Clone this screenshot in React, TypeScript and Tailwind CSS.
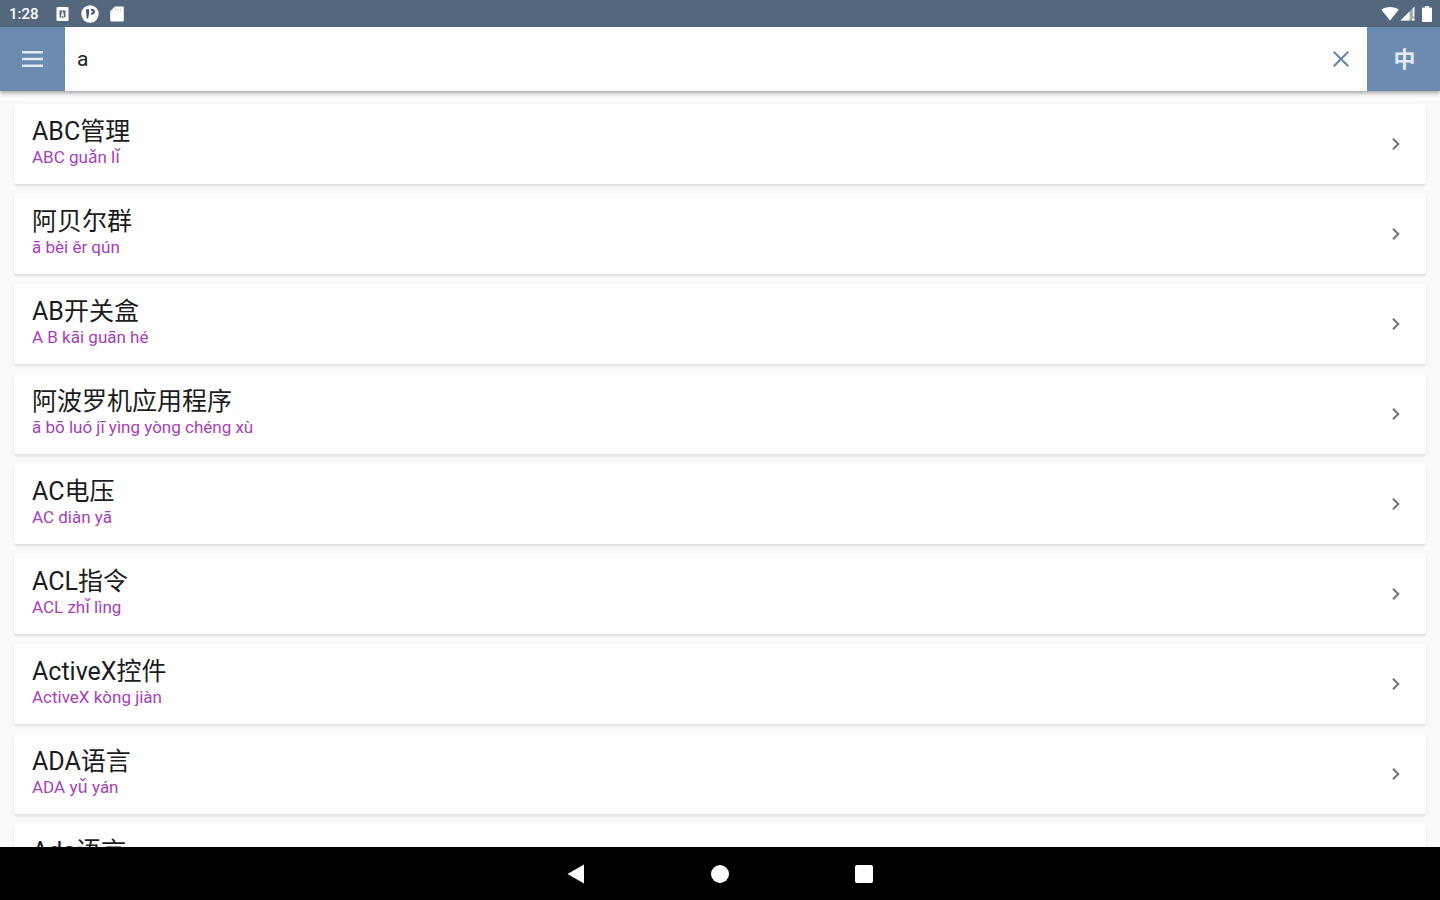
import React, { useState } from "react";

type Entry = { term: string; pinyin: string };

const entries: Entry[] = [
  { term: "ABC管理", pinyin: "ABC guǎn lǐ" },
  { term: "阿贝尔群", pinyin: "ā bèi ěr qún" },
  { term: "AB开关盒", pinyin: "A B kāi guān hé" },
  { term: "阿波罗机应用程序", pinyin: "ā bō luó jī yìng yòng chéng xù" },
  { term: "AC电压", pinyin: "AC diàn yā" },
  { term: "ACL指令", pinyin: "ACL zhǐ lìng" },
  { term: "ActiveX控件", pinyin: "ActiveX kòng jiàn" },
  { term: "ADA语言", pinyin: "ADA yǔ yán" },
  { term: "Ada语言", pinyin: "Ada yǔ yán" },
];

function StatusBar() {
  return (
    <div className="flex h-[27px] shrink-0 items-center justify-between bg-[#54687d] pr-2 pl-[9px] text-white">
      <div className="flex items-center">
        <span className="w-[47px] text-[15px] leading-5 font-medium">1:28</span>
        <svg className="mr-3 h-[14px] w-[13px]" viewBox="0 0 13 14" aria-hidden="true">
          <path
            fillRule="evenodd"
            fill="#fff"
            d="M1.5 0h10a1 1 0 0 1 1 1v12a1 1 0 0 1-1 1h-10a1 1 0 0 1-1-1V1a1 1 0 0 1 1-1zM3.5 3.5v7h6v-7z"
          />
          <path fill="#fff" d="M4.8 9.8 6 4.5h1l1.3 5.3H7.2l-.2-1H6l-.2 1z" />
        </svg>
        <svg className="mr-[11px] h-[18px] w-[18px]" viewBox="0 0 18 18" aria-hidden="true">
          <circle cx="9" cy="9" r="8.7" fill="#fff" />
          <path fill="#3f5870" d="M5 4.2h3v4L7.2 13.5H5.6z" />
          <path
            fill="#3f5870"
            d="M10 3.8c2.400 0 4 1.200 4 3S12.400 9.800 10 9.800V7.900c1.100 0 1.800-.3 1.800-1.100S11.100 5.700 10 5.700z"
          />
        </svg>
        <svg className="h-4 w-[14px]" viewBox="0 0 14 16" aria-hidden="true">
          <path
            fill="#fff"
            d="M5 .5h7.5a1.3 1.3 0 0 1 1.3 1.3v12.4a1.3 1.3 0 0 1-1.3 1.3h-11A1.3 1.3 0 0 1 .2 14.2V5.3z"
          />
          <path stroke="#54687d" strokeOpacity=".3" strokeWidth="1" d="M5.5 2.5V5M8 2.5V5M10.5 2.5V5" />
        </svg>
      </div>
      <div className="flex items-center">
        <svg className="mr-px h-[15px] w-[18px]" viewBox="0 0 18 15" aria-hidden="true">
          <path fill="#fff" d="M9 14.5.3 3.7C5 0 13 0 17.7 3.7z" />
        </svg>
        <svg className="mr-[7px] h-[15px] w-[15px]" viewBox="0 0 15 15" aria-hidden="true">
          <path fill="#fff" fillOpacity=".45" d="M14.5.5v14H.5z" />
          <path fill="#fff" d="M9.5 5.5v9h-9zM12 12.5h2.5v2H12z" />
          <path fill="#fff" fillOpacity=".8" d="M12.8 2.2 14.5.5v10h-1.7z" />
        </svg>
        <svg className="h-4 w-[10px]" viewBox="0 0 10 16" aria-hidden="true">
          <path
            fill="#fff"
            d="M3 0h4v1.5h2a1 1 0 0 1 1 1V15a1 1 0 0 1-1 1H1a1 1 0 0 1-1-1V2.5a1 1 0 0 1 1-1h2z"
          />
        </svg>
      </div>
    </div>
  );
}

function SearchBar() {
  const [query, setQuery] = useState("a");
  return (
    <header className="z-10 flex h-16 shrink-0 bg-white shadow-[0_2px_4px_rgba(0,0,0,0.35)]">
      <button
        type="button"
        aria-label="Menu"
        className="flex w-[65px] shrink-0 items-center justify-center bg-[#6b8bb0]"
      >
        <svg className="h-6 w-[22px]" viewBox="0 0 22 24" aria-hidden="true">
          <path stroke="#e4eaf2" strokeWidth="2.5" d="M0 5.2h21M0 12h21M0 18.8h21" />
        </svg>
      </button>
      <input
        type="text"
        aria-label="Search"
        value={query}
        onChange={(e) => setQuery(e.target.value)}
        className="min-w-0 flex-1 bg-white px-3 pt-[2px] text-[21px] text-[#222] outline-none"
      />
      <button
        type="button"
        aria-label="Clear"
        onClick={() => setQuery("")}
        className="flex w-[52px] shrink-0 items-center justify-center"
      >
        <svg className="h-4 w-4" viewBox="0 0 16 16" fill="none" aria-hidden="true">
          <path stroke="#6583a8" strokeWidth="2" d="M.7.7l14.6 14.6M15.3.7.7 15.3" />
        </svg>
      </button>
      <button
        type="button"
        className="flex w-[73px] shrink-0 items-center justify-center bg-[#6b8bb0] pl-[2px] text-[22px] font-bold text-[#e4eaf2]"
      >
        中
      </button>
    </header>
  );
}

function EntryRow({ term, pinyin }: Entry) {
  return (
    <li>
      <a
        href="#"
        className="flex h-20 items-center justify-between rounded-[3px] bg-white pr-[26px] pl-[18px] shadow-[0_2px_3px_rgba(0,0,0,0.11)]"
      >
        <span className="flex flex-col">
          <span className="text-[25px] leading-[26px] text-[#1c1c1c]">{term}</span>
          <span className="text-[17px] leading-6 text-[#a63fba]">{pinyin}</span>
        </span>
        <svg className="h-3 w-2" viewBox="0 0 8 12" fill="none" aria-hidden="true">
          <path stroke="#757575" strokeWidth="2" d="M1 .8 6.3 6 1 11.2" />
        </svg>
      </a>
    </li>
  );
}

function NavBar() {
  return (
    <nav className="flex h-[53px] shrink-0 items-center justify-center bg-black">
      <button type="button" aria-label="Back" className="flex w-36 justify-center">
        <svg className="h-5 w-[18px]" viewBox="0 0 18 20" aria-hidden="true">
          <path fill="#fff" d="M17 .5v19L.5 10z" />
        </svg>
      </button>
      <button type="button" aria-label="Home" className="flex w-36 justify-center">
        <span className="size-[18px] rounded-full bg-white" />
      </button>
      <button type="button" aria-label="Recent apps" className="flex w-36 justify-center">
        <span className="size-[18px] rounded-[2px] bg-white" />
      </button>
    </nav>
  );
}

export default function App() {
  return (
    <div className="flex h-screen flex-col overflow-hidden bg-[#fafafa] font-[Roboto,'Noto_Sans_CJK_SC',sans-serif]">
      <StatusBar />
      <SearchBar />
      <main className="min-h-0 flex-1 overflow-hidden">
        <ul className="flex flex-col gap-[10px] px-[14px] pt-[13px]">
          {entries.map((entry) => (
            <EntryRow key={entry.term} {...entry} />
          ))}
        </ul>
      </main>
      <NavBar />
    </div>
  );
}
